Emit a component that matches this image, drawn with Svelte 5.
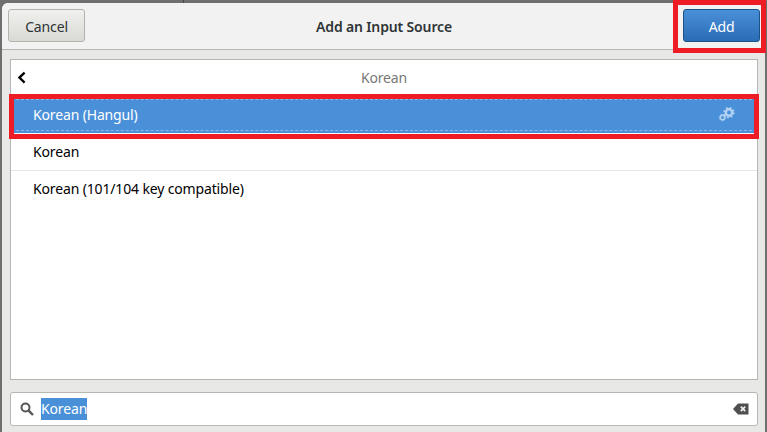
<script>
  const rows = ["Korean", "Korean (101/104 key compatible)"];
</script>

<div class="desktop">
  <div class="seam"></div>
  <div class="window">
    <header class="bar">
      <button class="btn">Cancel</button>
      <h1>Add an Input Source</h1>
      <button class="btn primary">Add</button>
    </header>
    <main class="content">
      <section class="list">
        <div class="list-head">
          <svg class="back" width="10" height="14" viewBox="0 0 10 14"><path d="M7.6 1.6 L2.4 6.6 L7.6 11.6" fill="none" stroke="#000" stroke-width="2.3"/></svg>
          <span>Korean</span>
        </div>
        <div class="row selected">
          <span>Korean (Hangul)</span>
          <svg class="gears" width="18" height="16" viewBox="0 0 18 16">
            <g fill="none" stroke="#b4d3f2">
              <circle cx="11" cy="6.5" r="3.2" stroke-width="2.4"/>
              <circle cx="11" cy="6.5" r="4.9" stroke-width="1.5" stroke-dasharray="1.9 1.95"/>
              <circle cx="4.5" cy="11.5" r="2.2" stroke-width="1.4"/>
              <circle cx="4.5" cy="11.5" r="3.3" stroke-width="1" stroke-dasharray="1.3 1.3"/>
            </g>
          </svg>
        </div>
        {#each rows as row}
          <div class="row">{row}</div>
        {/each}
      </section>
      <div class="search">
        <svg width="16" height="16" viewBox="0 0 16 16"><circle cx="6.5" cy="6.5" r="4" fill="none" stroke="#555" stroke-width="2"/><path d="M9.6 9.6 L14 14" stroke="#555" stroke-width="2.4"/></svg>
        <span class="sel">Korean</span>
        <svg class="clear" width="16" height="12" viewBox="0 0 16 12"><path fill="#4f4f4f" d="M5 0.5H15.5V11.5H5L0 6Z"/><path d="M7.8 3.6 L12.2 8.2 M12.2 3.6 L7.8 8.2" stroke="#eee" stroke-width="1.7"/></svg>
      </div>
    </main>
  </div>
  <div class="mark mark-add"></div>
  <div class="mark mark-row"></div>
</div>

<style>
  :global(body) { margin: 0; }
  .desktop {
    position: relative;
    width: 767px;
    height: 432px;
    overflow: hidden;
    background: #6f6f6f;
    padding: 3px 2px 0 2px;
    box-sizing: border-box;
    font-family: "Noto Sans", "Open Sans", sans-serif;
    font-size: 14px;
    letter-spacing: -0.15px;
  }
  .seam {
    position: absolute;
    left: 183px;
    top: 0;
    width: 1px;
    height: 3px;
    background: #444;
  }
  .window {
    height: 429px;
    background: #e8e8e7;
    border-radius: 6px 6px 0 0;
    display: flex;
    flex-direction: column;
    overflow: hidden;
  }
  .bar {
    height: 47px;
    flex: none;
    box-sizing: border-box;
    background: #f2f2f2;
    border-bottom: 1px solid #b6b6b3;
    display: flex;
    align-items: center;
    justify-content: space-between;
    padding: 0 5px 1px 6px;
  }
  .bar h1 {
    margin: 1px 0 0;
    font-size: 14px;
    font-weight: 600;
    letter-spacing: -0.15px;
    color: #2e3436;
  }
  .btn {
    width: 77px;
    height: 33px;
    box-sizing: border-box;
    border: 1px solid #b3b3ae;
    border-radius: 3px;
    background: linear-gradient(#f0f0ee, #d9d9d5);
    color: #2e3436;
    font: inherit;
    letter-spacing: inherit;
    padding: 1px 0 0;
  }
  .primary {
    border-color: #1c5187;
    background: linear-gradient(#4a90d9, #2a6cb5);
    color: #fff;
  }
  .content {
    flex: 1;
    display: flex;
    flex-direction: column;
    padding: 9px 7px 6px 8px;
    gap: 12px;
    min-height: 0;
  }
  .list {
    height: 321px;
    box-sizing: border-box;
    background: #fff;
    border: 1px solid #b6b6b3;
    flex: none;
  }
  .list-head {
    height: 37px;
    box-sizing: border-box;
    padding-bottom: 2px;
    display: flex;
    align-items: center;
    justify-content: center;
    color: #777;
    position: relative;
  }
  .back {
    position: absolute;
    left: 6px;
    top: 11px;
  }
  .row {
    height: 37px;
    box-sizing: border-box;
    display: flex;
    align-items: center;
    justify-content: space-between;
    padding: 0 21px 2px 22px;
    color: #000;
    border-bottom: 1px solid #e6e6e6;
  }
  .row:last-child {
    border-bottom: 0;
  }
  .selected {
    background: #4a90d9;
    color: #fff;
    border-bottom: 1px solid #fff;
    position: relative;
  }
  .selected::before,
  .selected::after {
    content: "";
    position: absolute;
    left: 0;
    right: 0;
    border-bottom: 1px dashed #8db9e8;
  }
  .selected::before {
    top: 2px;
  }
  .selected::after {
    bottom: 2px;
  }
  .search {
    height: 34px;
    flex: none;
    box-sizing: border-box;
    background: #fff;
    border: 1px solid #b6b6b3;
    border-radius: 3px;
    display: flex;
    align-items: center;
    padding: 0 8px 0 8px;
    gap: 6px;
    color: #fff;
  }
  .sel {
    background: #4a90d9;
    line-height: 22px;
  }
  .clear {
    margin-left: auto;
  }
  .mark {
    position: absolute;
    border: 5px solid #ee1c25;
    box-sizing: border-box;
    pointer-events: none;
  }
  .mark-add {
    left: 673px;
    top: 0;
    width: 93px;
    height: 53px;
  }
  .mark-row {
    left: 9px;
    top: 94px;
    width: 750px;
    height: 45px;
  }
</style>
